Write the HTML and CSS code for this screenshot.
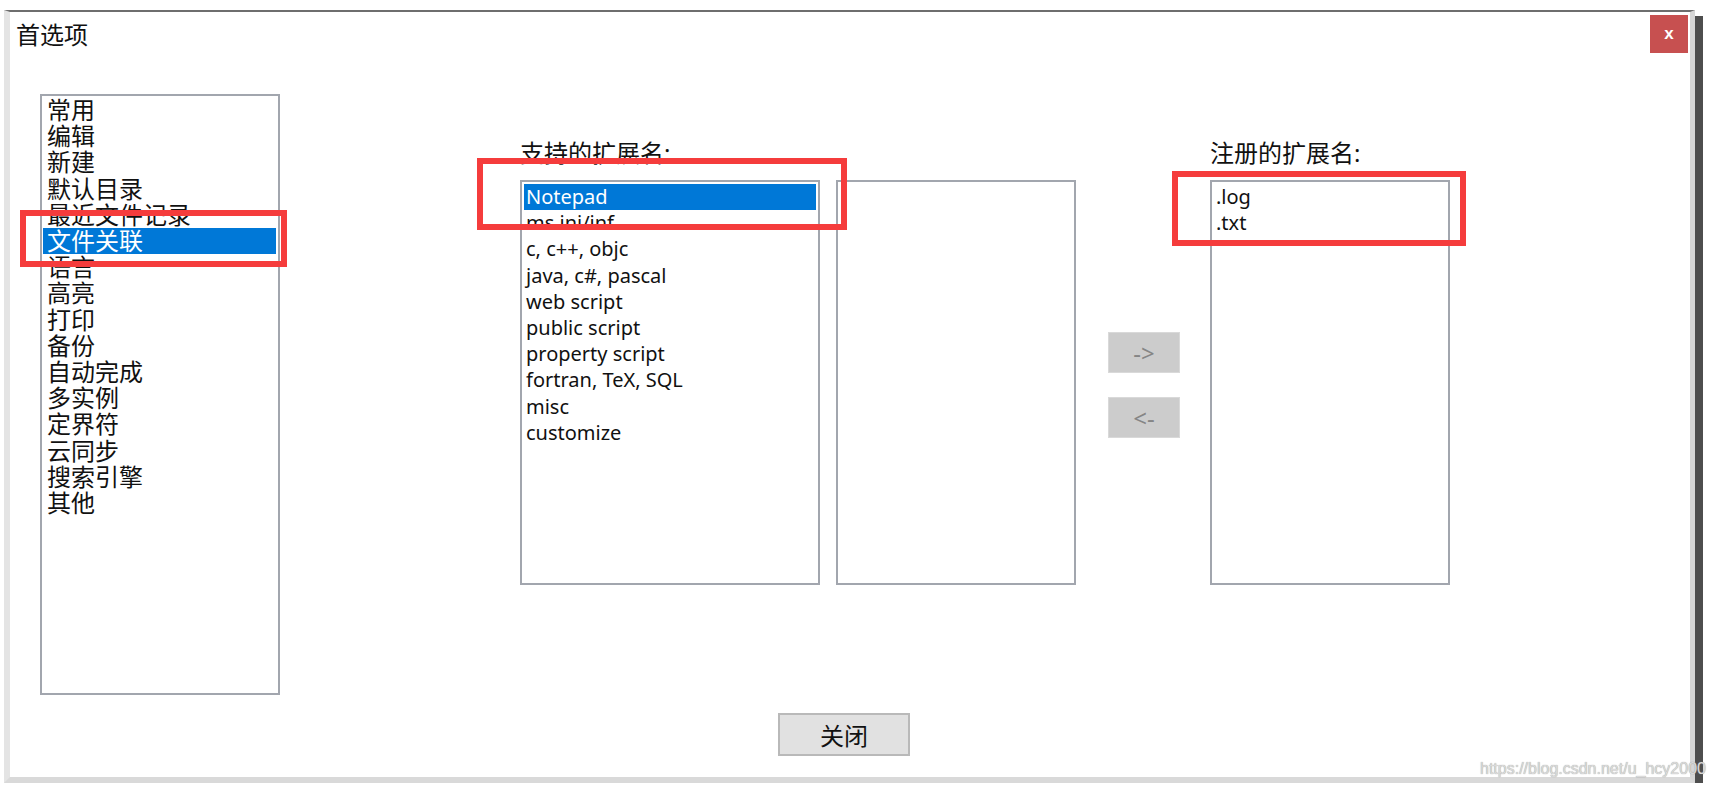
FILE: index.html
```html
<!DOCTYPE html>
<html lang="zh-CN">
<head>
    <meta charset="UTF-8">
    <meta name="viewport" content="width=device-width, initial-scale=1.0">
    <title>首选项</title>
    <link rel="stylesheet" href="styles.css">
</head>
<body>

<div class="window">
    <div class="titlebar">
        <span class="title">首选项</span>
        <button class="close-x">x</button>
    </div>

    <div class="content">
        <ul class="listbox category-list">
            <li>常用</li>
            <li>编辑</li>
            <li>新建</li>
            <li>默认目录</li>
            <li>最近文件记录</li>
            <li class="selected">文件关联</li>
            <li>语言</li>
            <li>高亮</li>
            <li>打印</li>
            <li>备份</li>
            <li>自动完成</li>
            <li>多实例</li>
            <li>定界符</li>
            <li>云同步</li>
            <li>搜索引擎</li>
            <li>其他</li>
        </ul>

        <div class="ext-group supported">
            <div class="label">支持的扩展名:</div>
            <div class="list-row">
                <ul class="listbox ext-list">
                    <li class="selected">Notepad</li>
                    <li>ms ini/inf</li>
                    <li>c, c++, objc</li>
                    <li>java, c#, pascal</li>
                    <li>web script</li>
                    <li>public script</li>
                    <li>property script</li>
                    <li>fortran, TeX, SQL</li>
                    <li>misc</li>
                    <li>customize</li>
                </ul>
                <ul class="listbox sub-list"></ul>
            </div>
        </div>

        <div class="arrow-buttons">
            <button class="arrow-btn">-&gt;</button>
            <button class="arrow-btn">&lt;-</button>
        </div>

        <div class="ext-group registered">
            <div class="label">注册的扩展名:</div>
            <ul class="listbox ext-list reg-list">
                <li>.log</li>
                <li>.txt</li>
            </ul>
        </div>
    </div>

    <div class="footer">
        <button class="close-btn">关闭</button>
    </div>

    <div class="mark mark-category"></div>
    <div class="mark mark-supported"></div>
    <div class="mark mark-registered"></div>
    <div class="watermark">https://blog.csdn.net/u_hcy2000</div>
    <div class="logo-bit"></div>
</div>

</body>
</html>
```

FILE: styles.css
```css
body {
    margin: 0;
    padding: 0;
    background-color: #ffffff;
    font-family: "Noto Sans", "Noto Sans CJK SC", sans-serif;
    color: #111111;
    overflow: hidden;
}
.window {
    position: relative;
    box-sizing: border-box;
    width: 1691px;
    height: 773px;
    margin: 10px 0 0 4px;
    background-color: #ffffff;
    border-left: 6px solid #e4e4e4;
    border-top: 2px solid #6e6e6e;
    border-right: 5px solid #d6d6d6;
    border-bottom: 6px solid #d9d9d9;
    box-shadow: 8px 6px 0 #4e4e4e;
}
.titlebar {
    display: flex;
    justify-content: space-between;
    align-items: flex-start;
    height: 48px;
}
.title {
    padding: 10px 0 0 6px;
    font-size: 24px;
    line-height: 26px;
}
.close-x {
    width: 38px;
    height: 38px;
    margin: 3px 2px 0 0;
    padding: 0;
    border: none;
    background-color: #c75050;
    color: white;
    font-family: "Liberation Sans", sans-serif;
    font-size: 17px;
    font-weight: bold;
    line-height: 36px;
}
.content {
    display: flex;
    align-items: flex-start;
}
.listbox {
    box-sizing: border-box;
    list-style: none;
    margin: 0;
    border: 2px solid #a2a6ae;
    background-color: white;
}
.listbox li {
    white-space: nowrap;
    line-height: 26.2px;
}
.listbox li.selected {
    background-color: #0078d7;
    color: white;
}
.category-list {
    width: 240px;
    height: 601px;
    margin: 34px 0 0 30px;
    padding: 1px 2px 0 1px;
    font-size: 24px;
}
.category-list li {
    padding-left: 4px;
}
.ext-group {
    margin-top: 80px;
}
.supported {
    margin-left: 240px;
}
.registered {
    margin-left: 30px;
}
.label {
    font-size: 24px;
    line-height: 26px;
    margin-bottom: 14px;
}
.list-row {
    display: flex;
    gap: 16px;
}
.ext-list {
    width: 300px;
    height: 405px;
    padding: 2px;
    font-size: 20px;
}
.ext-list li {
    padding-left: 2px;
}
.sub-list {
    width: 240px;
    height: 405px;
}
.reg-list {
    width: 240px;
}
.arrow-buttons {
    display: flex;
    flex-direction: column;
    gap: 24px;
    margin: 272px 0 0 32px;
}
.arrow-btn {
    width: 72px;
    height: 41px;
    padding: 0;
    border: 1px solid #d9d9d9;
    background-color: #cccccc;
    color: #858585;
    font-family: "Noto Sans", sans-serif;
    font-size: 24px;
    line-height: 38px;
}
.footer {
    display: flex;
    margin-top: 18px;
    padding-left: 768px;
}
.close-btn {
    width: 132px;
    height: 43px;
    padding: 0;
    border: 2px solid #b9b9b9;
    background-color: #e1e1e1;
    color: #111111;
    font-family: "Noto Sans CJK SC", sans-serif;
    font-size: 24px;
}
.mark {
    position: absolute;
    box-sizing: border-box;
    border: 6px solid #f53c3c;
}
.mark-category {
    left: 10px;
    top: 198px;
    width: 267px;
    height: 57px;
}
.mark-supported {
    left: 467px;
    top: 146px;
    width: 370px;
    height: 72px;
}
.mark-registered {
    left: 1162px;
    top: 159px;
    width: 294px;
    height: 75px;
}
.watermark {
    position: absolute;
    left: 1470px;
    top: 748px;
    font-family: "Liberation Sans", Arial, sans-serif;
    font-size: 16px;
    line-height: 18px;
    color: #dadada;
    text-shadow: 0 0 1px #8c8c8c;
    white-space: nowrap;
}
.logo-bit {
    position: absolute;
    left: 1637px;
    top: 773px;
    width: 18px;
    height: 10px;
    border-radius: 50% 50% 0 0;
    background-color: #f26a2e;
}
```
